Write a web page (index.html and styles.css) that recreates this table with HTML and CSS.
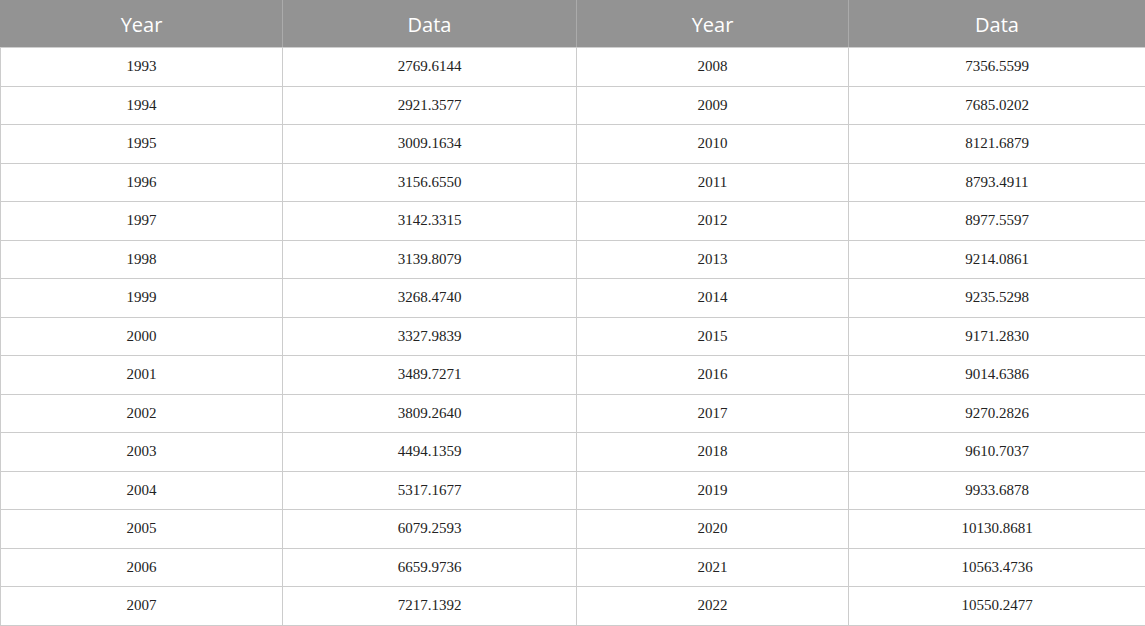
FILE: index.html
```html
<!DOCTYPE html>
<html>
<head>
<meta charset="utf-8">
<link rel="stylesheet" href="styles.css">
</head>
<body>
<table class="data-table">
<colgroup>
<col class="c1"><col class="c2"><col class="c3"><col class="c4">
</colgroup>
<thead>
<tr><th>Year</th><th>Data</th><th>Year</th><th>Data</th></tr>
</thead>
<tbody>
<tr><td>1993</td><td>2769.6144</td><td>2008</td><td>7356.5599</td></tr>
<tr><td>1994</td><td>2921.3577</td><td>2009</td><td>7685.0202</td></tr>
<tr><td>1995</td><td>3009.1634</td><td>2010</td><td>8121.6879</td></tr>
<tr><td>1996</td><td>3156.6550</td><td>2011</td><td>8793.4911</td></tr>
<tr><td>1997</td><td>3142.3315</td><td>2012</td><td>8977.5597</td></tr>
<tr><td>1998</td><td>3139.8079</td><td>2013</td><td>9214.0861</td></tr>
<tr><td>1999</td><td>3268.4740</td><td>2014</td><td>9235.5298</td></tr>
<tr><td>2000</td><td>3327.9839</td><td>2015</td><td>9171.2830</td></tr>
<tr><td>2001</td><td>3489.7271</td><td>2016</td><td>9014.6386</td></tr>
<tr><td>2002</td><td>3809.2640</td><td>2017</td><td>9270.2826</td></tr>
<tr><td>2003</td><td>4494.1359</td><td>2018</td><td>9610.7037</td></tr>
<tr><td>2004</td><td>5317.1677</td><td>2019</td><td>9933.6878</td></tr>
<tr><td>2005</td><td>6079.2593</td><td>2020</td><td>10130.8681</td></tr>
<tr><td>2006</td><td>6659.9736</td><td>2021</td><td>10563.4736</td></tr>
<tr><td>2007</td><td>7217.1392</td><td>2022</td><td>10550.2477</td></tr>
</tbody>
</table>
</body>
</html>
```
FILE: styles.css
```css
html, body {
  margin: 0;
  padding: 0;
  background: #ffffff;
}
.data-table {
  width: 1145px;
  border-collapse: collapse;
  table-layout: fixed;
}
.c1 { width: 282px; }
.c2 { width: 294px; }
.c3 { width: 272px; }
.c4 { width: 297px; }
.data-table th {
  height: 46px;
  padding: 0;
  background: #939393;
  color: #ffffff;
  font-family: "Open Sans", "Noto Sans", sans-serif;
  font-weight: 400;
  font-size: 20px;
  text-align: center;
  vertical-align: middle;
  border-left: 1px solid #ababab;
  border-right: 1px solid #ababab;
  border-top: 1px solid #939393;
  border-bottom: 1px solid #cfcfcf;
}
.data-table th:first-child { border-left-color: #939393; }
.data-table th:last-child { border-right-color: #939393; }
.data-table td {
  height: 37.5px;
  padding: 0;
  font-family: "Liberation Serif", "Times New Roman", serif;
  font-size: 15px;
  color: #222222;
  text-align: center;
  vertical-align: middle;
  border: 1px solid #cccccc;
}
```
